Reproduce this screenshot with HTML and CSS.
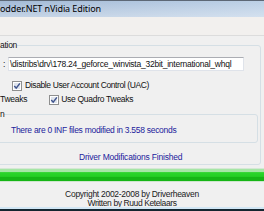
FILE: index.html
```html
<!DOCTYPE html>
<html>
<head>
<meta charset="utf-8">
<link rel="stylesheet" href="styles.css">
</head>
<body>
<div class="window">
  <div class="titlebar"><span class="title">odder.NET nVidia Edition</span></div>
  <div class="menubar"></div>
  <fieldset class="group outer">
    <legend>ation</legend>
    <div class="path-row">
      <span class="colon">:</span>
      <div class="textbox">\distribs\drv\178.24_geforce_winvista_32bit_international_whql</div>
    </div>
    <div class="check-row uac">
      <svg class="cb" width="10" height="10" viewBox="0 0 10 10"><rect x="0.5" y="0.5" width="9" height="9" fill="#fff" stroke="#8e8f8f"/><rect x="2" y="2" width="6" height="6" fill="#dfe4ec"/><path d="M2.3 5.1 L4.2 7.2 L7.9 2.4" fill="none" stroke="#3f548d" stroke-width="1.5"/></svg>
      <span class="lbl">Disable User Account Control (UAC)</span>
    </div>
    <div class="check-row tweaks">
      <span class="lbl">Tweaks</span>
      <svg class="cb quadro" width="10" height="10" viewBox="0 0 10 10"><rect x="0.5" y="0.5" width="9" height="9" fill="#fff" stroke="#8e8f8f"/><rect x="2" y="2" width="6" height="6" fill="#dfe4ec"/><path d="M2.3 5.1 L4.2 7.2 L7.9 2.4" fill="none" stroke="#3f548d" stroke-width="1.5"/></svg>
      <span class="lbl">Use Quadro Tweaks</span>
    </div>
    <fieldset class="group inner">
      <legend>n</legend>
      <div class="result">There are 0 INF files modified in 3.558 seconds</div>
    </fieldset>
    <div class="status">Driver Modifications Finished</div>
  </fieldset>
  <div class="progress"><div class="fill"></div></div>
  <div class="credits">
    <div>Copyright 2002-2008 by Driverheaven</div>
    <div class="author">Written by Ruud Ketelaars</div>
  </div>
  <div class="frame-bottom"></div>
</div>
</body>
</html>
```
FILE: styles.css
```css
html, body {
  margin: 0;
  padding: 0;
}
body {
  width: 264px;
  height: 211px;
  overflow: hidden;
  background: #f0f0f0;
  font-family: "Liberation Sans", Arial, sans-serif;
  font-size: 8.5px;
  letter-spacing: -0.28px;
  line-height: 11px;
  color: #111;
}
.window {
  display: flex;
  flex-direction: column;
  height: 211px;
  overflow: hidden;
}
.titlebar {
  height: 16px;
  border-top: 1px solid #5d6876;
  background:
    linear-gradient(to bottom, rgba(255,255,255,0) 0%, rgba(255,255,255,0.35) 100%),
    linear-gradient(to right, #a3bad6, #bcd0e6);
  display: flex;
  align-items: center;
  flex: none;
}
.title {
  font-family: "Noto Sans", "Open Sans", sans-serif;
  font-size: 9px;
  letter-spacing: -0.1px;
  line-height: 16px;
  color: #000;
}
.menubar {
  height: 18px;
  border-bottom: 1px solid #dcdcdc;
  background: #f2f0ee;
  flex: none;
}
.group {
  border: 1px solid #d5dfe5;
  border-radius: 3px;
  min-width: 0;
  flex: none;
}
.group legend {
  padding: 0;
  margin: 0;
  line-height: 11px;
  height: 11px;
}
.outer {
  margin: 4px 3px 0 -12px;
  padding: 6px 0 1px 11px;
}
.path-row {
  display: flex;
  align-items: center;
  height: 14px;
}
.colon {
  width: 8px;
  padding-left: 3px;
  box-sizing: border-box;
}
.textbox {
  width: 236px;
  height: 14px;
  box-sizing: border-box;
  background: #fff;
  border: 1px solid #dfe3ea;
  border-top-color: #abadb3;
  padding-left: 1px;
  line-height: 12px;
  letter-spacing: -0.24px;
  white-space: nowrap;
  overflow: hidden;
}
.check-row {
  display: flex;
  align-items: center;
  height: 11px;
}
.uac {
  margin-top: 9px;
  padding-left: 12px;
  letter-spacing: -0.38px;
}
.tweaks {
  margin-top: 3px;
}
.cb {
  flex: none;
  display: block;
}
.uac .cb {
  margin-right: 3px;
}
.quadro {
  margin-left: 22px;
  margin-right: 2px;
}
.inner {
  margin: 4px 2px 0 -12px;
  padding: 5px 0 6px 11px;
}
.result {
  padding-left: 11px;
  color: #22229c;
}
.status {
  margin-top: 9px;
  padding-left: 79px;
  letter-spacing: -0.2px;
  color: #22229c;
}
.progress {
  margin-top: 3px;
  height: 14px;
  box-sizing: border-box;
  border-top: 1px solid #d4e8d4;
  border-bottom: 1px solid #cde6cd;
  flex: none;
}
.fill {
  height: 100%;
  background: linear-gradient(to bottom, #a6e6a6 0%, #a6e6a6 22%, #2bd42b 30%, #23cf23 62%, #15b515 66%, #15b515 100%);
}
.credits {
  margin-top: 8px;
  text-align: center;
  line-height: 8.5px;
  color: #1a1a1a;
  flex: none;
}
.author {
  letter-spacing: -0.4px;
}
.frame-bottom {
  margin-top: auto;
  height: 4px;
  border-top: 2px solid #d2e7f5;
  background: #142630;
  flex: none;
}
```
